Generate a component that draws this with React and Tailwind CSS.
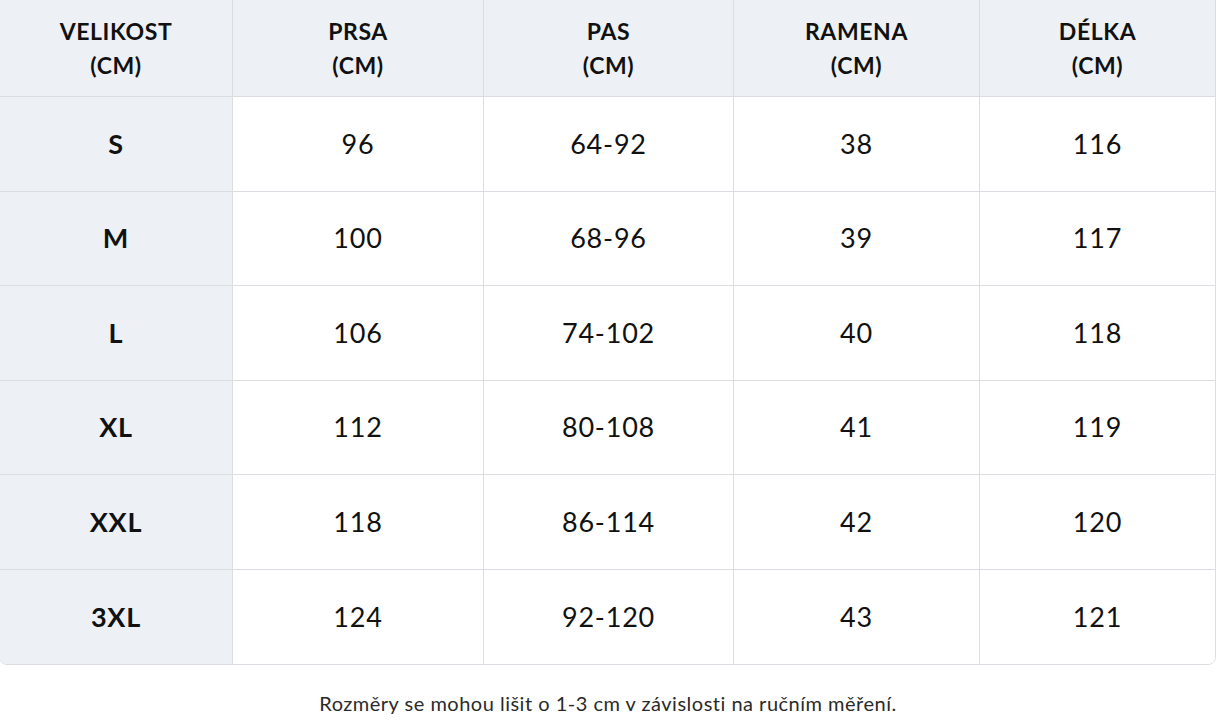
const headers = ['VELIKOST', 'PRSA', 'PAS', 'RAMENA', 'DÉLKA'];

const rows = [
  ['S', '96', '64-92', '38', '116'],
  ['M', '100', '68-96', '39', '117'],
  ['L', '106', '74-102', '40', '118'],
  ['XL', '112', '80-108', '41', '119'],
  ['XXL', '118', '86-114', '42', '120'],
  ['3XL', '124', '92-120', '43', '121'],
];

const cols = 'grid grid-cols-[232px_251px_250px_246px_1fr]';

export default function App() {
  return (
    <div className="h-[727px] w-[1216px] overflow-hidden bg-white font-['Lato','Noto_Sans',sans-serif] text-[#111]">
      <div className="-ml-px -mt-px w-[1217px] overflow-hidden rounded-b-lg border border-[#dadde2]">
        <div className={`${cols} h-[96px] bg-[#edf1f6]`}>
          {headers.map((h, i) => (
            <div
              key={h}
              className={`flex flex-col items-center justify-center text-[23px] font-bold leading-[34px] tracking-[0.6px] ${i > 0 ? 'border-l border-[#dadde2]' : ''}`}
            >
              <span>{h}</span>
              <span>(CM)</span>
            </div>
          ))}
        </div>
        {rows.map((row) => (
          <div key={row[0]} className={`${cols} h-[94.6px] border-t border-[#dadde2]`}>
            {row.map((cell, i) => (
              <div
                key={i}
                className={`flex items-center justify-center text-[27px] tracking-[0.8px] ${
                  i === 0 ? 'bg-[#edf1f6] font-bold' : 'border-l border-[#dadde2] bg-white'
                }`}
              >
                {cell}
              </div>
            ))}
          </div>
        ))}
      </div>
      <p className="mt-[23px] text-center text-[20px] tracking-[0.5px] text-[#2a2a2a]">
        Rozměry se mohou lišit o 1-3 cm v závislosti na ručním měření.
      </p>
    </div>
  );
}
